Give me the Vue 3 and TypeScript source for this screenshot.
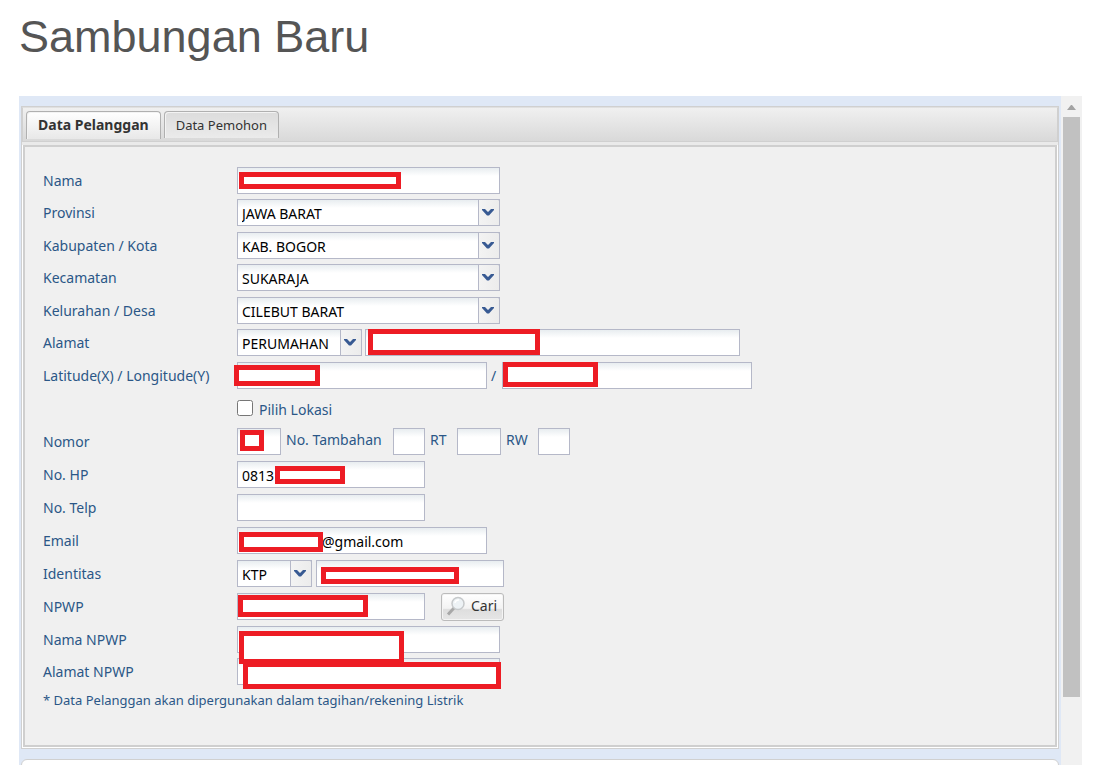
<script setup lang="ts">
import { ref } from 'vue'

interface Choice {
  id: string
  label: string
  value: string
}

const tabs = ['Data Pelanggan', 'Data Pemohon']
const activeTab = ref(0)
const chevron = 'M0 0h3l3 3 3-3h3v1L7 6.500H5L0 1z'

const regions = ref<Choice[]>([
  { id: 'provinsi', label: 'Provinsi', value: 'JAWA BARAT' },
  { id: 'kabupaten', label: 'Kabupaten / Kota', value: 'KAB. BOGOR' },
  { id: 'kecamatan', label: 'Kecamatan', value: 'SUKARAJA' },
  { id: 'kelurahan', label: 'Kelurahan / Desa', value: 'CILEBUT BARAT' },
])
</script>

<template>
  <div class="page">
    <h1>Sambungan Baru</h1>
    <div class="viewport">
      <div class="content">
        <section class="panel">
          <div class="tabs" role="tablist">
            <button
              v-for="(tab, i) in tabs"
              :key="tab"
              type="button"
              role="tab"
              class="tab"
              :class="{ active: i === activeTab }"
              :aria-selected="i === activeTab"
              @click="activeTab = i"
            >{{ tab }}</button>
          </div>
          <div class="strip"></div>
          <form class="form" @submit.prevent>
            <div class="row">
              <label class="name" for="nama">Nama</label>
              <span class="field w-l"><input id="nama" type="text"><i class="mask m-nama"></i></span>
            </div>
            <div v-for="r in regions" :key="r.id" class="row">
              <label class="name" :for="r.id">{{ r.label }}</label>
              <span class="field w-l">
                <select :id="r.id" v-model="r.value"><option>{{ r.value }}</option></select>
                <span class="trigger"><svg viewBox="0 0 12 7"><path :d="chevron" /></svg></span>
              </span>
            </div>
            <div class="row">
              <label class="name" for="alamat">Alamat</label>
              <span class="field w-jenis">
                <select id="jenis" aria-label="Jenis alamat"><option>PERUMAHAN</option></select>
                <span class="trigger"><svg viewBox="0 0 12 7"><path :d="chevron" /></svg></span>
              </span>
              <span class="field w-alamat"><input id="alamat" type="text"><i class="mask m-alamat"></i></span>
            </div>
            <div class="row">
              <label class="name" for="lat">Latitude(X) / Longitude(Y)</label>
              <span class="field w-m"><input id="lat" type="text"><i class="mask m-lat"></i></span>
              <span class="slash">/</span>
              <span class="field w-m"><input id="lon" type="text" aria-label="Longitude"><i class="mask m-lon"></i></span>
            </div>
            <div class="row">
              <span class="name"></span>
              <input id="pilih" class="check" type="checkbox">
              <label for="pilih">Pilih Lokasi</label>
            </div>
            <div class="row">
              <label class="name" for="nomor">Nomor</label>
              <span class="field w-s"><input id="nomor" type="text"><i class="mask m-nomor"></i></span>
              <label class="sub sub-tambahan" for="tambahan">No. Tambahan</label>
              <span class="field w-xs"><input id="tambahan" type="text"></span>
              <label class="sub" for="rt">RT</label>
              <span class="field w-s"><input id="rt" type="text"></span>
              <label class="sub sub-rw" for="rw">RW</label>
              <span class="field w-xs"><input id="rw" type="text"></span>
            </div>
            <div class="row">
              <label class="name" for="hp">No. HP</label>
              <span class="field w-n"><input id="hp" type="text" value="0813"><i class="mask m-hp"></i></span>
            </div>
            <div class="row">
              <label class="name" for="telp">No. Telp</label>
              <span class="field w-n"><input id="telp" type="text"></span>
            </div>
            <div class="row">
              <label class="name" for="email">Email</label>
              <span class="field w-m"><input id="email" class="after-mask" type="text" value="@gmail.com"><i class="mask m-email"></i></span>
            </div>
            <div class="row">
              <label class="name" for="identitas">Identitas</label>
              <span class="field w-ktp">
                <select id="identitas"><option>KTP</option></select>
                <span class="trigger"><svg viewBox="0 0 12 7"><path :d="chevron" /></svg></span>
              </span>
              <span class="field w-n"><input type="text" aria-label="Nomor identitas"><i class="mask m-ktp"></i></span>
            </div>
            <div class="row">
              <label class="name" for="npwp">NPWP</label>
              <span class="field w-n"><input id="npwp" type="text"><i class="mask m-npwp"></i></span>
              <button type="button" class="search">
                <svg viewBox="0 0 20 20">
                  <path d="M8 12L2 18.500" stroke="#a8a8a8" stroke-width="3" />
                  <circle cx="12" cy="7.500" r="6" fill="#edf2f5" stroke="#c6c9cb" stroke-width="1.500" />
                  <path d="M9 7a3.500 3.500 0 0 1 4-3" fill="none" stroke="#fff" stroke-width="1.500" />
                </svg>Cari
              </button>
            </div>
            <div class="row">
              <label class="name" for="nama-npwp">Nama NPWP</label>
              <span class="field w-l"><input id="nama-npwp" type="text"><i class="mask m-nama-npwp"></i></span>
            </div>
            <div class="row">
              <label class="name" for="alamat-npwp">Alamat NPWP</label>
              <span class="field w-l"><input id="alamat-npwp" type="text"><i class="mask m-alamat-npwp"></i></span>
            </div>
            <p class="note">* Data Pelanggan akan dipergunakan dalam tagihan/rekening Listrik</p>
          </form>
        </section>
        <section class="next-panel"></section>
      </div>
      <div class="scrollbar">
        <svg viewBox="0 0 9 5"><path d="M4 0h1l4 5H0z" /></svg>
        <div class="thumb"></div>
      </div>
    </div>
  </div>
</template>

<style>
body {
  background: #fff;
}
</style>

<style scoped>
* {
  box-sizing: border-box;
}
.page {
  display: flex;
  flex-direction: column;
  height: 100vh;
  overflow: hidden;
  font: 14px/20px "Noto Sans", Tahoma, sans-serif;
  color: #2b5787;
}
h1 {
  margin: 0;
  padding: 12px 19px 34px;
  font: 400 45px/50px "Liberation Sans", Arial, sans-serif;
  color: #555;
}
.viewport {
  display: flex;
  flex: 1;
  min-height: 0;
  margin: 0 15px 0 19px;
  background: #dfe8f6;
}
.content {
  flex: 1;
  min-width: 0;
  padding: 10px 2px 0;
  overflow: hidden;
}
.panel {
  border: 1px solid #d0d0d0;
  background: #fff;
}
.tabs {
  display: flex;
  gap: 3px;
  height: 35px;
  padding: 3px 3px 0;
  border: 1px solid #d0d0d0;
  border-top-color: #e0e0e0;
  background: linear-gradient(#f0f0f0, #d9d9d9);
}
.tab {
  height: 27px;
  padding: 0 11px 1px;
  border: 1px solid #b0b0b0;
  border-bottom: 0;
  border-radius: 4px 4px 0 0;
  background: linear-gradient(#dcdcdc, #ebebeb);
  box-shadow: inset 1px 1px #f3f3f3;
  font: inherit;
  font-size: 13px;
  color: #333;
}
.tab.active {
  height: 28px;
  background: linear-gradient(#fff, #e8e8e8);
  font-size: 14px;
  font-weight: 700;
}
.strip {
  height: 3px;
  background: #eaeaea;
}
.form {
  display: flex;
  flex-direction: column;
  margin: 0 1px 1px;
  padding: 20px 18px 36px;
  border: 2px solid #cfcfcf;
  background: #f0f0f0;
}
.row {
  display: flex;
  flex: none;
  height: 33px;
}
.row:nth-child(-n + 5):nth-child(odd),
.row:nth-child(15) {
  height: 32px;
}
.name {
  width: 194px;
  padding-top: 4px;
  white-space: nowrap;
}
.field {
  position: relative;
  flex: none;
  height: 27px;
}
input[type="text"],
select {
  display: block;
  width: 100%;
  height: 100%;
  margin: 0;
  padding: 2px 4px 0;
  border: 1px solid #b5b8c8;
  border-radius: 0;
  outline: 0;
  background: linear-gradient(#e8edf0, #fff 8px);
  font: inherit;
  color: #000;
}
select {
  appearance: none;
}
.w-l { width: 263px; }
.w-m { width: 250px; }
.w-n { width: 188px; }
.w-s { width: 44px; }
.w-xs { width: 32px; }
.w-ktp { width: 75px; margin-right: 4px; }
.w-jenis { width: 125px; margin-right: 3px; }
.w-alamat { width: 375px; }
.trigger {
  position: absolute;
  inset: 0 0 0 auto;
  width: 22px;
  border: 1px solid #b5b8c8;
  border-radius: 0 2px 0 0;
  background: linear-gradient(90deg, #f3f3f3, #ececec);
  pointer-events: none;
}
.trigger svg {
  display: block;
  width: 12px;
  height: 7px;
  margin: 9px 0 0 3px;
  fill: #385a93;
}
.mask {
  position: absolute;
  z-index: 1;
  border: 5px solid #ed1c24;
  background: #fff;
}
.m-nama { left: 2px; top: 5px; width: 162px; height: 17px; }
.m-alamat { left: 3px; top: 0; width: 172px; height: 26px; }
.m-lat { left: -3px; top: 3px; width: 86px; height: 21px; }
.m-lon { left: 1px; top: 0; width: 95px; height: 25px; }
.m-nomor { left: 3px; top: 2px; width: 24px; height: 21px; }
.m-hp { left: 38px; top: 5px; width: 70px; height: 18px; }
.m-email { left: 2px; top: 5px; width: 84px; height: 20px; }
.m-ktp { left: 5px; top: 7px; width: 138px; height: 17px; }
.m-npwp { left: 1px; top: 2px; width: 130px; height: 22px; }
.m-nama-npwp { left: 2px; top: 5px; width: 165px; height: 33px; }
.m-alamat-npwp { left: 6px; top: 4px; width: 258px; height: 27px; }
input.after-mask {
  padding-left: 84px;
}
.slash {
  width: 15px;
  padding: 4px 0 0 4px;
}
.check {
  width: 16px;
  height: 16px;
  margin: 5px 6px 0 0;
}
.check + label {
  padding-top: 5px;
}
.sub {
  width: 32px;
  padding: 2px 0 0 5px;
  white-space: nowrap;
}
.sub-tambahan {
  width: 112px;
}
.sub-rw {
  width: 37px;
}
.search {
  display: flex;
  align-items: center;
  gap: 5px;
  height: 28px;
  margin-left: 16px;
  padding: 0 6px 2px 4px;
  border: 1px solid #bbb;
  border-radius: 3px;
  background: linear-gradient(#fff, #f3f3f3 55%, #dedede 60%, #e6e6e6);
  box-shadow: inset 0 0 0 1px #f4f4f4;
  font: inherit;
  color: #333;
}
.search svg {
  width: 20px;
  height: 20px;
}
.note {
  margin: 0;
  font-size: 13px;
  line-height: 18px;
}
.next-panel {
  height: 40px;
  margin-top: 10px;
  border: 1px solid #d0d0d0;
  border-radius: 6px 6px 0 0;
  background: #fff;
}
.scrollbar {
  display: flex;
  flex: none;
  flex-direction: column;
  align-items: center;
  width: 21px;
  background: #f1f1f1;
}
.scrollbar svg {
  flex: none;
  width: 9px;
  height: 5px;
  margin: 9px 0 7px;
  fill: #a3a3a3;
}
.thumb {
  width: 17px;
  height: 90%;
  max-height: 580px;
  background: #c1c1c1;
}
</style>
